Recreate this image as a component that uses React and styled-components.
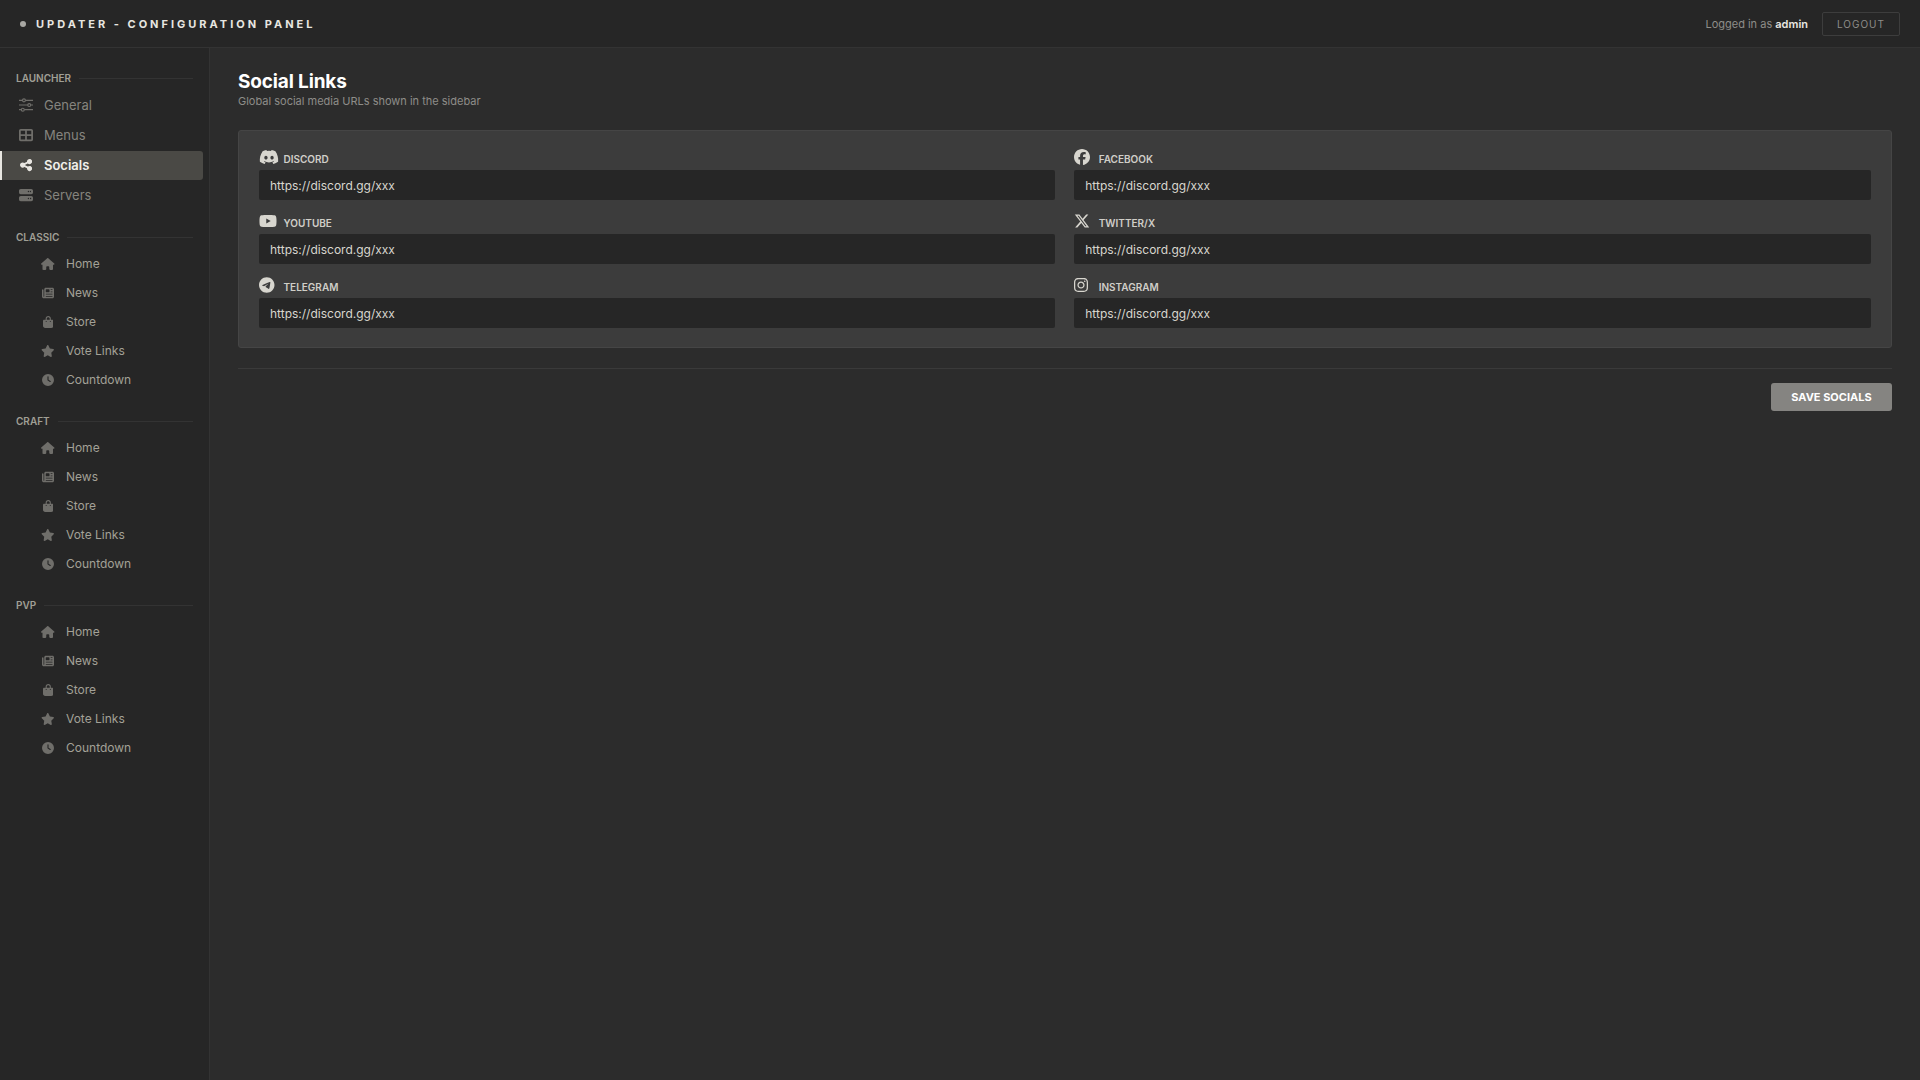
import styled, { createGlobalStyle } from "styled-components";
import {
  FaDiscord,
  FaFacebook,
  FaYoutube,
  FaXTwitter,
  FaTelegram,
  FaInstagram,
  FaShareNodes,
  FaServer,
  FaHouse,
  FaNewspaper,
  FaBagShopping,
  FaStar,
  FaClock,
  FaTableCellsLarge,
} from "react-icons/fa6";

const GlobalStyle = createGlobalStyle`
  html, body {
    margin: 0;
    padding: 0;
    background: #2c2c2c;
  }
  * {
    box-sizing: border-box;
  }
`;

const Page = styled.div`
  width: 100%;
  height: 100vh;
  display: flex;
  flex-direction: column;
  font-family: "Inter", "Liberation Sans", sans-serif;
  background: #2c2c2c;
  overflow: hidden;
`;

const TopBar = styled.header`
  flex: none;
  height: 48px;
  display: flex;
  align-items: center;
  justify-content: space-between;
  padding: 0 20px;
  background: #262626;
  border-bottom: 1px solid #333333;
`;

const Brand = styled.div`
  display: flex;
  align-items: center;
  gap: 10px;
  font-size: 11px;
  font-weight: 700;
  letter-spacing: 3px;
  color: #e8e6e1;
`;

const Dot = styled.span`
  width: 6px;
  height: 6px;
  border-radius: 50%;
  background: #a8a7a3;
`;

const UserBox = styled.div`
  display: flex;
  align-items: center;
  gap: 14px;
  font-size: 11px;
  color: #8e8d89;
  b {
    font-weight: 600;
    color: #e8e6e1;
  }
`;

const LogoutButton = styled.button`
  width: 78px;
  height: 24px;
  padding: 0;
  background: transparent;
  border: 1px solid #3d3d3d;
  border-radius: 2px;
  font-family: inherit;
  font-size: 10px;
  letter-spacing: 1px;
  color: #8e8d89;
`;

const Body = styled.div`
  flex: 1;
  display: flex;
  min-height: 0;
`;

const Sidebar = styled.aside`
  flex: none;
  width: 210px;
  padding: 22px 0 0;
  background: #262626;
  border-right: 1px solid #333333;
`;

const Section = styled.section`
  height: 184px;
  &:first-child {
    height: 159px;
  }
`;

const SectionTitle = styled.div`
  display: flex;
  align-items: center;
  gap: 8px;
  height: 16px;
  margin: 0 16px ${(p) => p.$gap}px;
  font-size: 10px;
  font-weight: 600;
  color: #a09f95;
  &::after {
    content: "";
    flex: 1;
    height: 1px;
    background: #333333;
  }
`;

const NavItem = styled.div`
  display: flex;
  align-items: center;
  gap: 11px;
  width: 203px;
  height: 29px;
  margin-bottom: 1px;
  padding: 0 0 1px 17px;
  font-size: 13px;
  color: ${(p) => (p.$active ? "#f2f0eb" : "#85847e")};
  font-weight: ${(p) => (p.$active ? 600 : 400)};
  background: ${(p) => (p.$active ? "#4a4945" : "transparent")};
  border-left: 2px solid ${(p) => (p.$active ? "#e8e6e1" : "transparent")};
  border-radius: 0 3px 3px 0;
`;

const NavIcon = styled.span`
  flex: none;
  width: 14px;
  display: flex;
  justify-content: center;
  color: ${(p) => (p.$active ? "#e8e6e1" : "#6f6e6a")};
  svg {
    width: ${(p) => p.$w}px;
    height: 14px;
  }
`;

const SubItem = styled.div`
  display: flex;
  align-items: center;
  gap: 11px;
  height: 29px;
  padding-left: 41px;
  font-size: 12px;
  color: #a3a197;
`;

const SubIcon = styled.span`
  flex: none;
  width: 14px;
  display: flex;
  justify-content: center;
  color: #6f6e6a;
  svg {
    width: ${(p) => p.$w}px;
    height: 12px;
  }
`;

const Main = styled.main`
  flex: 1;
  padding: 21px 28px 0;
`;

const Title = styled.h1`
  margin: 0;
  font-size: 19px;
  line-height: 26px;
  font-weight: 700;
  letter-spacing: -0.15px;
  color: #ffffff;
`;

const Subtitle = styled.p`
  margin: -1px 0 0;
  font-size: 11px;
  line-height: 14px;
  color: #8e8d89;
`;

const Card = styled.div`
  margin-top: 22px;
  height: 218px;
  padding: 17px 20.5px 0 20px;
  display: grid;
  grid-template-columns: 1fr 1fr;
  column-gap: 19px;
  row-gap: 12px;
  align-content: start;
  background: #3c3c3c;
  border: 1px solid #454545;
  border-radius: 3px;
`;

const Field = styled.div`
  display: flex;
  flex-direction: column;
`;

const FieldLabel = styled.label`
  display: flex;
  align-items: center;
  height: 22px;
  font-size: 10px;
  font-weight: 600;
  color: #d0cec8;
`;

const FieldIcon = styled.span`
  flex: none;
  width: 24.5px;
  display: flex;
  margin-top: -4px;
  color: #d8d6cf;
  svg {
    width: ${(p) => p.$w}px;
    height: 16px;
  }
`;

const Input = styled.input`
  width: 100%;
  height: 30px;
  padding: 0 11px;
  background: #262626;
  border: none;
  border-radius: 2px;
  outline: none;
  font-family: inherit;
  font-size: 12px;
  color: #d8d6cf;
`;

const Divider = styled.hr`
  margin: 20px 0 14px;
  border: none;
  border-top: 1px solid #3a3a3a;
`;

const Actions = styled.div`
  display: flex;
  justify-content: flex-end;
`;

const SaveButton = styled.button`
  width: 121px;
  height: 28px;
  padding: 0;
  background: #858481;
  border: none;
  border-radius: 3px;
  font-family: inherit;
  font-size: 11px;
  font-weight: 700;
  color: #ffffff;
`;

// three lines with small rings, fa6 only has the heavy version
const SlidersIcon = () => (
  <svg viewBox="0 0 24 24" fill="none" stroke="currentColor" strokeWidth="2">
    <path d="M0 4h6M11 4h13M0 12h15M20 12h4M0 20h4M9 20h15" />
    <circle cx="8.5" cy="4" r="2.5" />
    <circle cx="17.5" cy="12" r="2.5" />
    <circle cx="6.5" cy="20" r="2.5" />
  </svg>
);

const launcherItems = [
  { label: "General", icon: <SlidersIcon />, w: 14 },
  { label: "Menus", icon: <FaTableCellsLarge />, w: 14 },
  { label: "Socials", icon: <FaShareNodes />, w: 12.25, active: true },
  { label: "Servers", icon: <FaServer />, w: 14 },
];

const subItems = [
  { label: "Home", icon: <FaHouse />, w: 13.5 },
  { label: "News", icon: <FaNewspaper />, w: 12 },
  { label: "Store", icon: <FaBagShopping />, w: 10.5 },
  { label: "Vote Links", icon: <FaStar />, w: 13.5 },
  { label: "Countdown", icon: <FaClock />, w: 12 },
];

const socials = [
  { label: "Discord", icon: <FaDiscord />, w: 20 },
  { label: "Facebook", icon: <FaFacebook />, w: 16 },
  { label: "YouTube", icon: <FaYoutube />, w: 18 },
  { label: "Twitter/X", icon: <FaXTwitter />, w: 16 },
  { label: "Telegram", icon: <FaTelegram />, w: 15.5 },
  { label: "Instagram", icon: <FaInstagram />, w: 14 },
];

const App = () => {
  return (
    <Page>
      <GlobalStyle />
      <TopBar>
        <Brand>
          <Dot />
          UPDATER - CONFIGURATION PANEL
        </Brand>
        <UserBox>
          <span>
            Logged in as <b>admin</b>
          </span>
          <LogoutButton>LOGOUT</LogoutButton>
        </UserBox>
      </TopBar>
      <Body>
        <Sidebar>
          <Section>
            <SectionTitle $gap={5}>LAUNCHER</SectionTitle>
            {launcherItems.map((item) => (
              <NavItem key={item.label} $active={item.active}>
                <NavIcon $active={item.active} $w={item.w}>
                  {item.icon}
                </NavIcon>
                {item.label}
              </NavItem>
            ))}
          </Section>
          {["CLASSIC", "CRAFT", "PVP"].map((name) => (
            <Section key={name}>
              <SectionTitle $gap={4}>{name}</SectionTitle>
              {subItems.map((item) => (
                <SubItem key={item.label}>
                  <SubIcon $w={item.w}>{item.icon}</SubIcon>
                  {item.label}
                </SubItem>
              ))}
            </Section>
          ))}
        </Sidebar>
        <Main>
          <Title>Social Links</Title>
          <Subtitle>Global social media URLs shown in the sidebar</Subtitle>
          <Card>
            {socials.map((s) => (
              <Field key={s.label}>
                <FieldLabel>
                  <FieldIcon $w={s.w}>{s.icon}</FieldIcon>
                  {s.label.toUpperCase()}
                </FieldLabel>
                <Input defaultValue="https://discord.gg/xxx" />
              </Field>
            ))}
          </Card>
          <Divider />
          <Actions>
            <SaveButton>SAVE SOCIALS</SaveButton>
          </Actions>
        </Main>
      </Body>
    </Page>
  );
};

export default App;
